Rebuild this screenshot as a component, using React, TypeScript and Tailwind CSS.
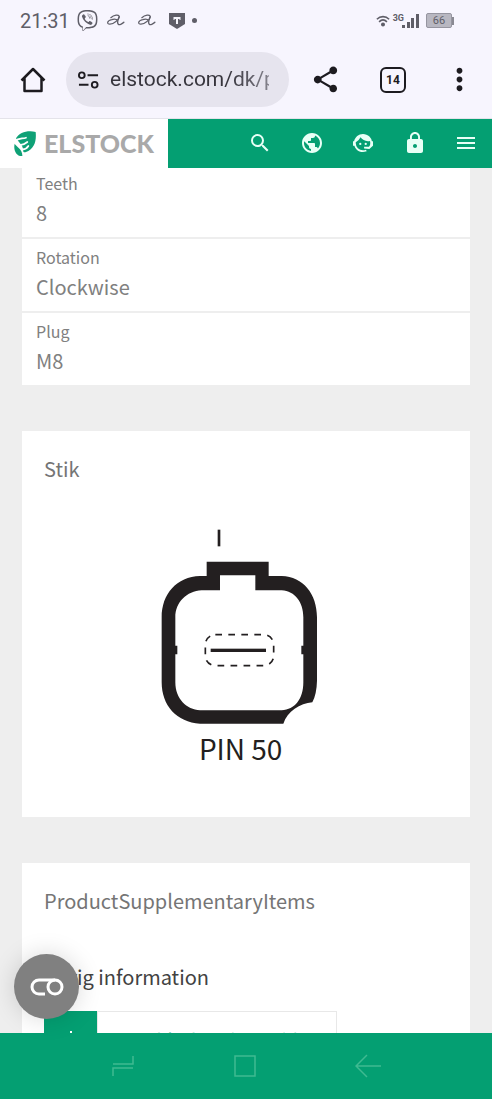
import type { ReactNode } from "react";
import { MdLock, MdMenu, MdMoreVert, MdPublic, MdSearch, MdShare } from "react-icons/md";
import { FaViber } from "react-icons/fa";

const specs = [
  { label: "Teeth", value: "8" },
  { label: "Rotation", value: "Clockwise" },
  { label: "Plug", value: "M8" },
];

const ScriptA = () => (
  <svg viewBox="0 0 20 14" className="w-[19px] h-[13px]" fill="none" stroke="currentColor" strokeLinecap="round">
    <path d="M5 4C8 1 14 0 14 3c0 3-6 8-10 8-4 0-3-4 2-5 3-1 5 0 5 0" strokeWidth="1.3" />
    <path d="M14 3c-1 3-3 6-1 8 1 1 4 0 6-2" strokeWidth="1.5" />
  </svg>
);

const StatusBar = () => (
  <div className="flex h-[41px] shrink-0 items-center justify-between pl-5 pr-[38px] text-[#5f5e68]">
    <div className="flex items-center">
      <span className="text-[20px] leading-6">21:31</span>
      <FaViber className="ml-[7px] size-[21px]" />
      <span className="ml-2 flex gap-3"><ScriptA /><ScriptA /></span>
      <svg viewBox="0 0 18 18" className="ml-3 size-[18px]">
        <path d="M1 1h16v11L9 17 1 12z" fill="currentColor" />
        <path d="M5.5 5h7v3h-1V7H10v5H8V7H6.500v1h-1z" fill="#f6f5fc" />
      </svg>
      <span className="ml-1.5 size-[5px] rounded-full bg-[#5f5e68]" />
    </div>
    <div className="flex items-center">
      <svg viewBox="0 0 16 14" className="size-[14px]" fill="none" stroke="currentColor" strokeWidth="1.8">
        <path d="M1 5c4-4 10-4 14 0M3.500 8c3-3 6-3 9 0" />
        <circle cx="8" cy="11" r="1.400" fill="currentColor" />
      </svg>
      <span className="ml-[3px] self-start text-[9px] font-bold leading-[10px]">3G</span>
      <svg viewBox="0 0 18 16" className="-ml-0.5 h-4 w-[18px]" fill="currentColor">
        <path d="M0 12h3v3H0zM5 9h3v6H5zM9 5h3v10H9zM14 1h3v14h-3z" />
      </svg>
      <span className="ml-1.5 flex items-center">
        <span className="flex h-[15px] w-[26px] items-center justify-center rounded-[2px] border border-[#9695a0] bg-[#b8b7c1] text-[11px] leading-3">
          66
        </span>
        <span className="h-2 w-0.5 bg-[#8a8993]" />
      </span>
    </div>
  </div>
);

const BrowserBar = () => (
  <div className="flex h-[78px] shrink-0 items-center border-b border-[#e4e3ea] pl-5 pr-5 text-[#1d1b20]">
    <button aria-label="Home">
      <svg viewBox="0 0 26 26" className="size-[26px]" fill="none" stroke="currentColor" strokeWidth="2.500">
        <path d="M1.500 13.500 13 2l11.500 11.500M4.500 11v13h17V11" strokeLinejoin="round" />
      </svg>
    </button>
    <div className="ml-5 flex h-[55px] min-w-0 flex-1 items-center rounded-full bg-[#e6e4ee] pl-3 pr-5">
      <svg viewBox="0 0 22 18" className="h-[18px] w-[21px] shrink-0" fill="none" stroke="currentColor" strokeWidth="2">
        <circle cx="4" cy="4" r="3" />
        <path d="M10 4h11M1 14h10" />
        <circle cx="17.500" cy="14" r="3" />
      </svg>
      <input
        aria-label="Address"
        readOnly
        value="elstock.com/dk/products"
        className="ml-[11px] w-full min-w-0 bg-gradient-to-r from-[#36343c] from-75% to-[#85838d] bg-clip-text text-[21px] text-transparent outline-none"
      />
    </div>
    <button aria-label="Share" className="ml-[21px]"><MdShare className="size-[31px]" /></button>
    <button
      aria-label="Tabs"
      className="ml-[39px] flex size-[26px] items-center justify-center rounded-[6px] border-[2.500px] border-current text-[12px] font-bold"
    >
      14
    </button>
    <button aria-label="More" className="-mr-[5px] ml-[36px]"><MdMoreVert className="size-[35px]" /></button>
  </div>
);

const FaceAgent = () => (
  <svg viewBox="0 0 24 24" className="size-6" fill="currentColor">
    <path d="M18.720 14.760c.350-.850.540-1.760.540-2.760 0-.720-.110-1.410-.300-2.050-.650.150-1.330.230-2.040.230-3.060 0-5.770-1.510-7.420-3.840a9.300 9.300 0 0 1-4.730 4.880C4.730 11.470 4.730 11.740 4.730 12A7.270 7.270 0 0 0 12 19.270c1.050 0 2.060-.230 2.970-.640.570 1.090.830 1.630.810 1.630-1.640.550-2.910.820-3.780.820-2.420 0-4.730-.950-6.430-2.660a9 9 0 0 1-2.240-3.690H2v-4.550h1.090C3.930 6.040 7.600 2.920 12 2.920c2.400 0 4.710.950 6.420 2.660a9.300 9.300 0 0 1 2.470 4.600H22v4.550h-.060L18.380 18l-5.300-.600v-1.670h4.830z" />
    <circle cx="9.270" cy="12.900" r="1.140" />
    <circle cx="14.720" cy="12.900" r="1.140" />
  </svg>
);

const HeaderButton = ({ label, children }: { label: string; children: ReactNode }) => (
  <button aria-label={label} className="flex size-6 items-center justify-center">
    {children}
  </button>
);

const SiteHeader = () => (
  <header className="flex h-[49px] shrink-0 bg-[#049f72] text-[#e8fff6]">
    <a href="/" className="flex w-[168px] items-center bg-white pl-3.5">
      <svg viewBox="0 0 66 78" className="h-[26px] w-[22px]" fill="#0fa176">
        <path d="M6 22C16 5 40-3 65 3C68 32 60 54 36 63C30 65 26 62 28 56L24 44Z" />
        <path d="M2 38C6 46 26 54 25 75C8 77-3 58 2 38Z" />
        <path
          d="M2 31C14 20 24 24 36 20M16 41C26 43 34 38 40 33M26 55C34 55 40 50 43 45"
          fill="none"
          stroke="#fff"
          strokeWidth="5"
          strokeLinecap="round"
        />
      </svg>
      <span className="ml-2 pb-px font-[Lato,sans-serif] text-[25px] font-black leading-7 text-[#a9a9a9]">ELSTOCK</span>
    </a>
    <nav className="flex flex-1 items-center justify-between pl-20 pr-3.5 pb-0.5">
      <HeaderButton label="Search"><MdSearch className="size-6" /></HeaderButton>
      <HeaderButton label="Language"><MdPublic className="size-6" /></HeaderButton>
      <HeaderButton label="Support"><FaceAgent /></HeaderButton>
      <HeaderButton label="Log in"><MdLock className="size-6" /></HeaderButton>
      <HeaderButton label="Menu"><MdMenu className="size-6" /></HeaderButton>
    </nav>
  </header>
);

const SpecList = () => (
  <dl className="-mt-[3px] divide-y-2 divide-[#eeeeee] bg-white text-[#808080]">
    {specs.map((spec) => (
      <div key={spec.label} className="px-3.5 pb-2.5 pt-1.5">
        <dt className="text-[16px] leading-6">{spec.label}</dt>
        <dd className="pt-1 text-[20px] leading-7">{spec.value}</dd>
      </div>
    ))}
  </dl>
);

const PlugDrawing = () => (
  <svg viewBox="0 60 636 720" className="mx-auto mt-[46px] h-[240px] w-[212px]" fill="#231f20">
    <rect x="233" y="62" width="8" height="50" />
    <path
      fillRule="evenodd"
      d="M200 158H386V201H425C490 203 531 255 531 325V515Q530 555 517 580C480 583 442 608 430 644H180C110 640 65 590 65 520V325C65 255 110 203 180 201H200ZM240 199V244H185C140 246 106 280 106 325V520C106 570 140 602 180 604H425C465 602 490 570 490 520V325C490 280 465 246 425 244H346V199Z"
    />
    <path d="M104 410h8v26h-8zM484 410h8v26h-8z" />
    <rect x="196" y="377" width="205" height="93" rx="30" fill="none" stroke="#231f20" strokeWidth="5" strokeDasharray="20 19" />
    <rect x="212" y="419" width="166" height="10" />
    <text x="302" y="752" textAnchor="middle" fontSize="84">PIN 50</text>
  </svg>
);

const Card = ({ title, children }: { title: string; children: ReactNode }) => (
  <section className="bg-white px-[22px] pt-6 pb-12">
    <h2 className="text-[20px] leading-7 text-[#757575]">{title}</h2>
    {children}
  </section>
);

const SystemNav = () => (
  <nav className="flex h-[66px] shrink-0 items-center justify-around bg-[#049f72] px-[62px] text-[#3fba91]">
    <button aria-label="Recent apps">
      <svg viewBox="0 0 24 24" className="size-6" fill="none" stroke="currentColor" strokeWidth="1.500">
        <path d="M22 2v8H2M22 14H2v8" />
      </svg>
    </button>
    <button aria-label="Home screen">
      <svg viewBox="0 0 24 24" className="size-6" fill="none" stroke="currentColor" strokeWidth="1.500">
        <path d="M2 2h20v20H2z" />
      </svg>
    </button>
    <button aria-label="Back">
      <svg viewBox="0 0 26 24" className="h-6 w-[26px]" fill="none" stroke="currentColor" strokeWidth="1.500">
        <path d="M12 1 1 12l11 11M1 12h25" />
      </svg>
    </button>
  </nav>
);

export default function App() {
  return (
    <div className="relative flex h-screen flex-col bg-[#f7f5fe] font-[Roboto,sans-serif]">
      <StatusBar />
      <BrowserBar />
      <SiteHeader />
      <main className="flex min-h-0 flex-1 flex-col gap-[46px] overflow-hidden bg-[#eeeeee] px-[22px] font-['Noto_Sans_CJK_SC',sans-serif]">
        <SpecList />
        <Card title="Stik">
          <PlugDrawing />
        </Card>
        <Card title="ProductSupplementaryItems">
          <h3 className="mt-12 text-[20px] leading-7 text-[#424242]">Øvrig information</h3>
          <button className="mt-5 flex h-14 w-[293px] text-[18px] text-[#049f72]">
            <span className="flex h-full w-[53px] items-center justify-center bg-[#049f72] text-white">
              <svg viewBox="0 0 16 16" className="size-4" fill="none" stroke="currentColor" strokeWidth="2">
                <path d="M8 0v11M3 7l5 5 5-5M1 15h14" />
              </svg>
            </span>
            <span className="flex h-full flex-1 items-center border border-[#e8e8e8] pl-5">Troubleshooting guide</span>
          </button>
        </Card>
      </main>
      <SystemNav />
      <button
        aria-label="Cookie settings"
        className="absolute bottom-20 left-3.5 flex size-[65px] items-center justify-center rounded-full bg-[#808080] text-white shadow-[0_0_24px_rgba(0,0,0,0.15)]"
      >
        <svg viewBox="0 0 34 18" className="h-[18px] w-[34px]" fill="none" stroke="currentColor" strokeWidth="3">
          <path d="M15 16H9A7 7 0 0 1 9 2h16" />
          <circle cx="25" cy="9" r="7" />
        </svg>
      </button>
    </div>
  );
}
